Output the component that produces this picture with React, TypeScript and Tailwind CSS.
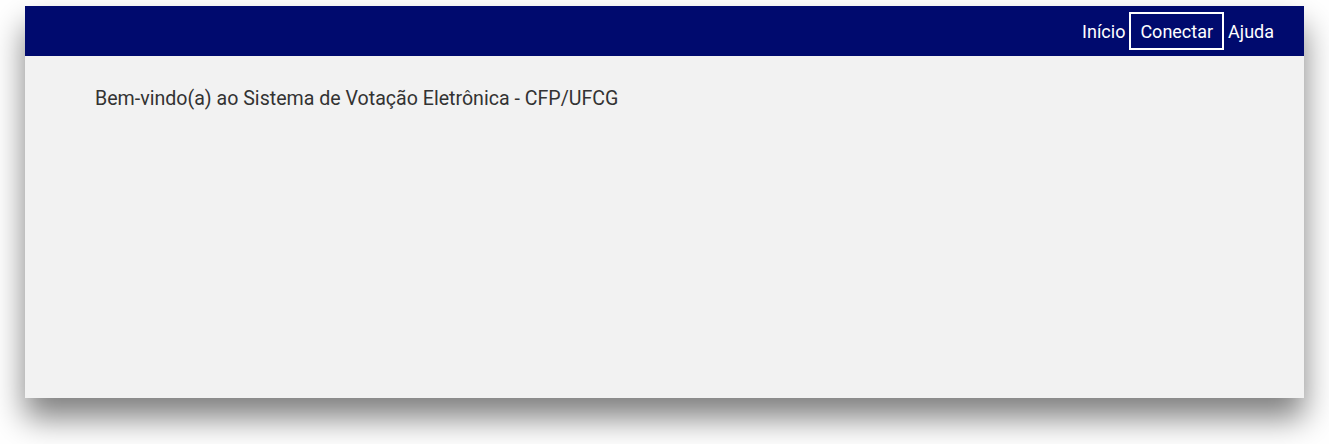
import React from 'react';

export default function App() {
  return (
    <div className="w-[1329px] h-[444px] bg-white pl-[25px] pt-[6px] overflow-hidden" style={{ fontFamily: 'Roboto, "Liberation Sans", sans-serif' }}>
      <div className="w-[1279px] h-[392px] bg-[#f2f2f2] flex flex-col shadow-[0_20px_30px_rgba(0,0,0,0.5)]">
        {/* Header */}
        <header className="h-[50px] bg-[#000a6e] flex items-center justify-end pr-[30px]">
          <nav className="flex items-center gap-[4px] text-white text-[18px]">
            <a className="leading-[21px]">Início</a>
            <a className="border-2 border-white px-[9px] h-[38px] flex items-center leading-[21px]">Conectar</a>
            <a className="leading-[21px]">Ajuda</a>
          </nav>
        </header>

        {/* Content */}
        <main className="pl-[70px] pt-[31px]">
          <p className="text-[19.6px] leading-[23px] text-[#333333]">
            Bem-vindo(a) ao Sistema de Votação Eletrônica - CFP/UFCG
          </p>
        </main>
      </div>
    </div>
  );
}
